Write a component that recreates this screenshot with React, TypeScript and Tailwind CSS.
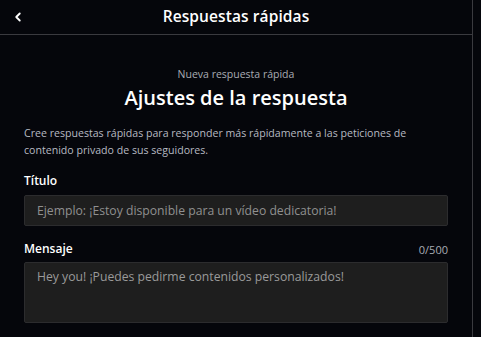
import { ChevronLeft } from "lucide-react";

export default function App() {
  return (
    <div
      className="h-[337px] w-[481px] bg-[#05060b] text-white overflow-hidden"
      style={{ fontFamily: '"Open Sans", "Noto Sans", sans-serif' }}
    >
      <div className="h-full w-[473px] border-r border-[#3a3a3f]">
        {/* cabecera */}
        <div className="relative flex h-[35px] items-center justify-center border-b border-[#3a3a3f]">
          <button className="absolute left-[11px] top-[10px] text-white">
            <ChevronLeft className="h-[14px] w-[14px]" strokeWidth={3.2} />
          </button>
          <h1 className="text-[15.5px] font-semibold tracking-[0.1px]">Respuestas rápidas</h1>
        </div>

        <div className="px-6">
          <p className="mt-[32px] text-center text-[10.5px] leading-[14px] text-[#a9acb4]">
            Nueva respuesta rápida
          </p>
          <h2 className="mt-[4px] text-center text-[20px] font-semibold leading-[26px]">
            Ajustes de la respuesta
          </h2>
          <p className="mt-[14px] text-[10.6px] leading-[17px] text-[#b7bac2]">
            Cree respuestas rápidas para responder más rápidamente a las peticiones de contenido
            privado de sus seguidores.
          </p>

          <label className="mt-[14px] block text-[12px] font-semibold leading-[16px]">Título</label>
          <input
            className="mt-[6px] block h-[31px] w-full rounded-[2px] border border-[#2c2c2e] bg-[#1e1e1e] px-3 text-[12.2px] text-[#9a9a9a] placeholder-[#909090] outline-none"
            placeholder="Ejemplo: ¡Estoy disponible para un vídeo dedicatoria!"
          />

          <div className="mt-[15px] flex items-end justify-between">
            <label className="text-[12px] font-semibold leading-[16px]">Mensaje</label>
            <span className="text-[11px] leading-[14px] text-[#a9acb4]">0/500</span>
          </div>
          <textarea
            className="mt-[5px] block h-[61px] w-full resize-none rounded-[2px] border border-[#2c2c2e] bg-[#1e1e1e] px-3 py-[5px] text-[12.2px] leading-[18px] text-[#9a9a9a] outline-none"
            defaultValue="Hey you! ¡Puedes pedirme contenidos personalizados!"
          />
        </div>
      </div>
    </div>
  );
}
